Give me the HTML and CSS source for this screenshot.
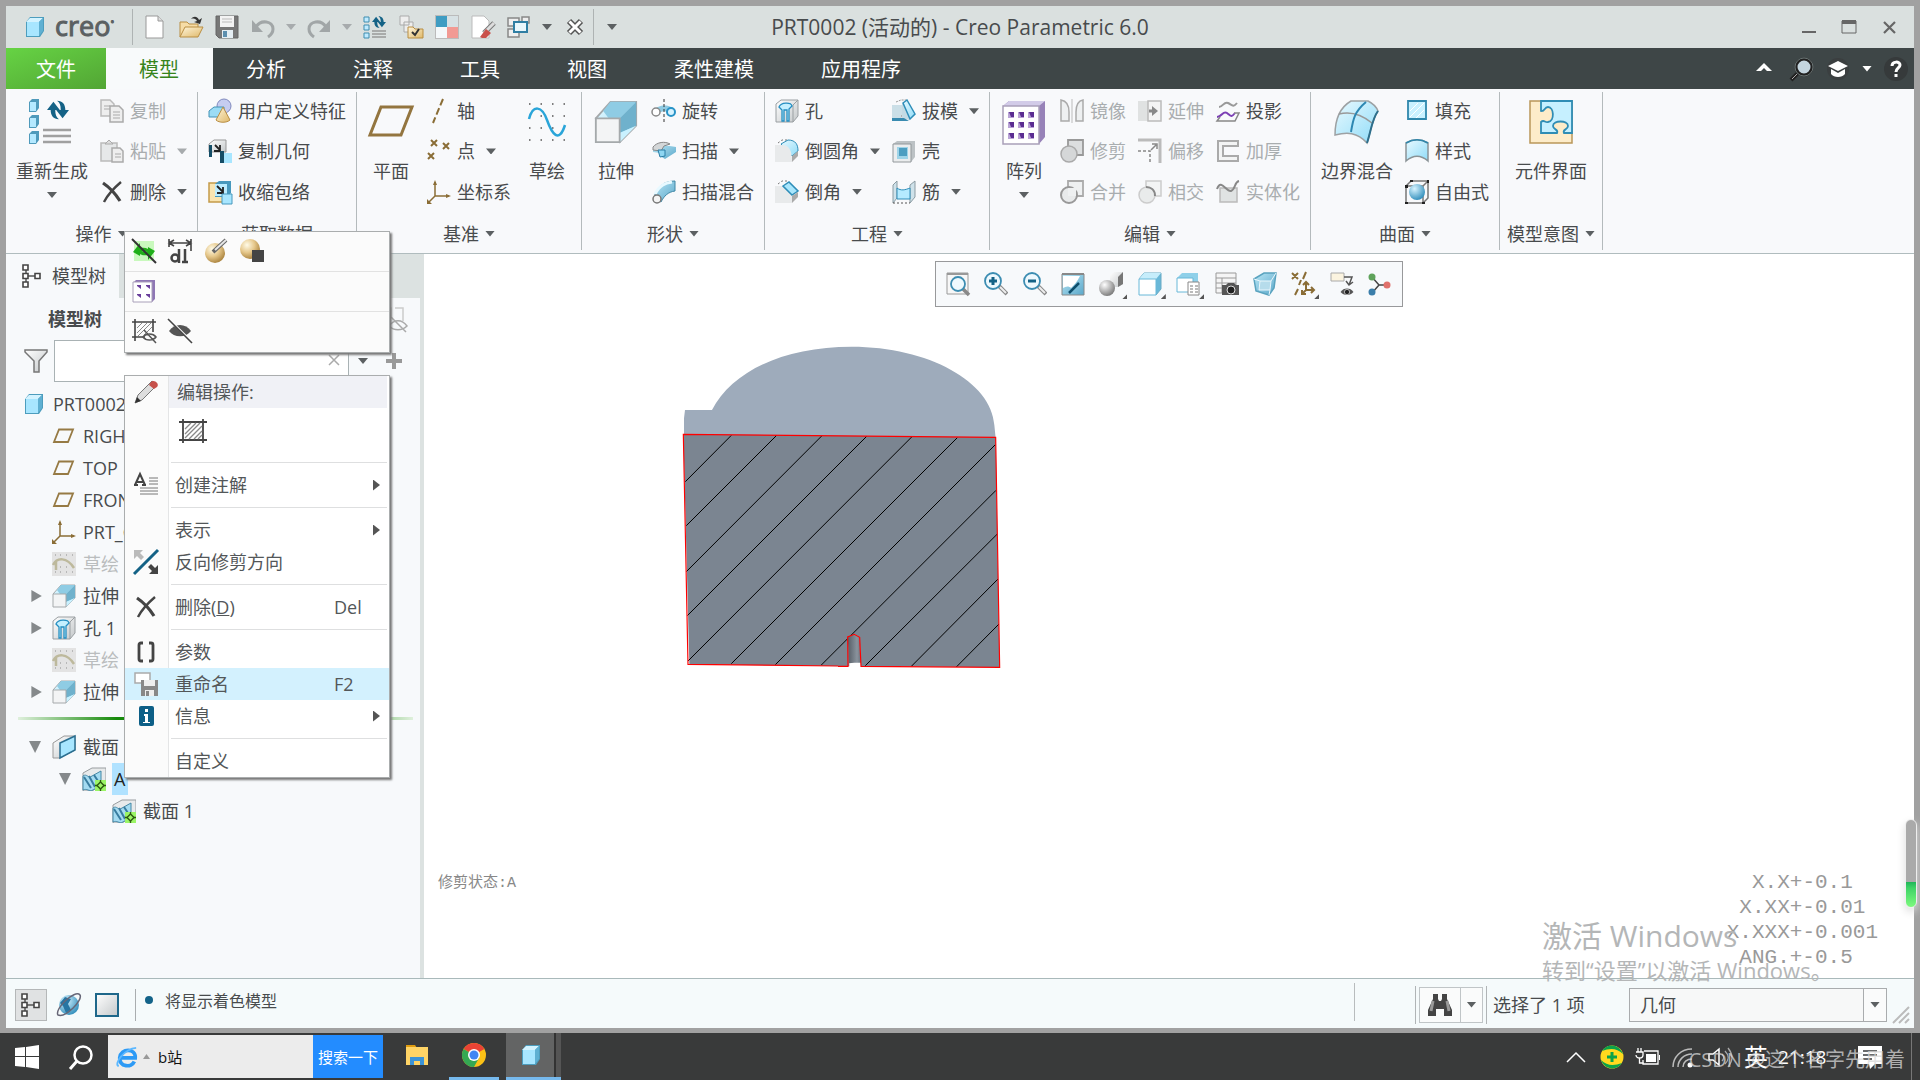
FILE: index.html
```html
<!DOCTYPE html>
<html lang="zh-CN">
<head>
  <meta charset="UTF-8">
  <title>PRT0002 - Creo Parametric 6.0</title>
  <link rel="stylesheet" href="styles.css">
</head>
<body>
  <!-- shared gradients and icons -->
  <svg class="sprite" aria-hidden="true">
    <defs>
      <linearGradient id="blue" x1="0" y1="0" x2="1" y2="1"><stop offset="0" stop-color="#e8f9ff"/><stop offset="1" stop-color="#8fdcf8"/></linearGradient>
      <linearGradient id="deep" x1="0" y1="0" x2="1" y2="1"><stop offset="0" stop-color="#b9e6f5"/><stop offset="1" stop-color="#5ba8ca"/></linearGradient>
      <linearGradient id="grey" x1="0" y1="0" x2="1" y2="1"><stop offset="0" stop-color="#ffffff"/><stop offset="1" stop-color="#c4c8ca"/></linearGradient>
      <linearGradient id="sand" x1="0" y1="0" x2="1" y2="1"><stop offset="0" stop-color="#fff6dc"/><stop offset="1" stop-color="#dfb869"/></linearGradient>
      <radialGradient id="ball" cx=".35" cy=".3" r=".75"><stop offset="0" stop-color="#fffbe8"/><stop offset=".5" stop-color="#e6c88c"/><stop offset="1" stop-color="#a8803a"/></radialGradient>
      <radialGradient id="steel" cx=".35" cy=".3" r=".75"><stop offset="0" stop-color="#fff"/><stop offset="1" stop-color="#777"/></radialGradient>
      <radialGradient id="sea" cx=".35" cy=".3" r=".75"><stop offset="0" stop-color="#d8f4ff"/><stop offset="1" stop-color="#2f8dbb"/></radialGradient>
      <linearGradient id="slot"><stop offset="0" stop-color="#555d66"/><stop offset=".7" stop-color="#8a939d"/><stop offset="1" stop-color="#6b747e"/></linearGradient>
    </defs>
    <symbol id="cube" viewBox="0 0 24 24"><path d="M3 7l4-5h14v14l-4 6H3z" fill="#4d9dbd"/><path d="M3 7l4-4h13l-4 4z" fill="#d3f3ff"/><path d="M16 7l4-4v13l-4 5z" fill="#5fb0d2"/><path d="M4 7h12v14H4z" fill="#a8e6ff"/></symbol>
    <symbol id="plane" viewBox="0 0 24 24"><path d="M7 5.500h14L16 18H2z" fill="none" stroke="#967a44" stroke-width="1.800"/></symbol>
    <symbol id="csys" viewBox="0 0 24 24"><path d="M8 2v14h14M8 16l-6 6" fill="none" stroke="#8a6d36" stroke-width="1.500"/><path d="M8 0l2 5H6zM24 16l-5-2v4zM0 24v-5l5 5z" fill="#8a6d36"/></symbol>
    <symbol id="extrude" viewBox="0 0 24 24"><path d="M1 10L9 1h14v13l-9 9z" fill="url(#blue)" stroke="#a5a9ab"/><path d="M5 6l4-5h14l-9 9H8z" fill="#8fcce4"/><path d="M14 10l9-9v13l-9 4z" fill="#6fb1cc"/><path d="M14 23v-5l9-4z" fill="#c9f1ff"/><path d="M1 10h13v13H1z" fill="#f3f4f5" stroke="#a5a9ab"/></symbol>
    <symbol id="hole" viewBox="0 0 24 24"><path d="M1 5l5-4h17v16l-5 6H1z" fill="url(#grey)" stroke="#9a9fa2"/><path d="M18 23V6l5-5" fill="none" stroke="#9a9fa2"/><path d="M4 8c2-5 12-5 13-1l-3 3v12h-2V11h-3v11H7V11z" fill="#c4f0ff" stroke="#258fc2" stroke-width="1.300"/></symbol>
    <symbol id="sketch" viewBox="0 0 24 24"><path d="M0 0h24v24H0z" fill="#e3e3e3"/><path d="M3 3h1M8 3h1M14 3h1M20 3h1M3 20h1M8 20h1M14 20h1M20 20h1M8 15h1M14 15h1" stroke="#aaa" stroke-width="1.500"/><path d="M1 13c4-8 14-8 21 3M4 10v8" fill="none" stroke="#bdb99c" stroke-width="2.500"/></symbol>
    <symbol id="section" viewBox="0 0 24 24"><path d="M1 6l9-5h14v14L10 24H1z" fill="#e8eaeb" stroke="#989da0"/><path d="M1 9c4-3 5 3 9 0l9-5v14l-8 5c-4 2-6-2-10 0z" fill="#a4dbf1" stroke="#4588a6"/><path d="M2 10l7 11M7 9l6 11M12 8l6 9" stroke="#397da0" stroke-width="2"/><path d="M13 13h11v11H13z" fill="#9bf566"/><path d="M18.500 13v11M13 18.500h11" stroke="#2d5a10" stroke-width="1.300"/><path d="M18.500 15l3.500 3.500-3.500 3.500-3.500-3.500z" fill="#9bf566" stroke="#2d5a10" stroke-width="1.400"/></symbol>
    <symbol id="cross" viewBox="0 0 24 24"><path d="M3 3c6 4 12 10 17 18" fill="none" stroke="#444" stroke-width="3.200"/><path d="M21 2C14 8 8 14 4 22" fill="none" stroke="#444" stroke-width="2.400"/></symbol>
    <symbol id="nodes" viewBox="0 0 24 24"><path d="M6 3v18M6 12h12" stroke="#555" stroke-width="1.500"/><path d="M3 1h5v5H3zM3 9.500h5v5H3zM3 18h5v5H3zM15 9.500h5v5h-5z" fill="#fff" stroke="#444" stroke-width="1.600"/></symbol>
    <symbol id="spin" viewBox="0 0 24 24"><path d="M7 3L0 12h4c0 6 3 10 9 10-3-2-4-5-4-10h5zM17 21l7-9h-4c0-6-3-10-9-10 3 2 4 5 4 10h-5z"/></symbol>
    <symbol id="hatch" viewBox="0 0 28 24"><path d="M4 0v24M24 0v24M0 3h28M0 21h28" stroke="#444" stroke-width="1.800"/><path d="M6 10l6-6M6 15L17 4M6 19L21 4M10 20L23 7M15 20l8-8M19 20l4-4" stroke="#888" stroke-width="1.300"/></symbol>
    <symbol id="eye" viewBox="0 0 24 24"><path d="M1 12c5-8 17-8 22 0-5 7-17 7-22 0z" fill="#555"/><circle cx="12" cy="12" r="4.500" fill="#222" stroke="#fff"/></symbol>
    <symbol id="lens" viewBox="0 0 24 24"><path d="M15 14l8 8" stroke="#888" stroke-width="4"/><path d="M16 15l6 6" stroke="#eee" stroke-width="2"/><circle cx="9" cy="9" r="8" fill="#eef9fe" stroke="#3c8db2" stroke-width="1.800"/></symbol>
  </svg>

  <div class="window">
    <header class="titlebar">
      <div class="logo">
        <svg class="icon"><use href="#cube"/></svg>
        <span>creo<sup>•</sup></span>
      </div>
      <div class="quick">
        <button title="新建"><svg class="icon" viewBox="0 0 24 24"><path d="M3 1h12l5 5v17H3z" fill="#fff" stroke="#999"/><path d="M15 1v5h5" fill="#ddd" stroke="#999"/></svg></button>
        <button title="打开"><svg class="icon" viewBox="0 0 24 24"><path d="M1 22V7h7l2 2h9v4" fill="#f6dca6" stroke="#b98e43"/><path d="M1 22l5-10h18l-5 10z" fill="url(#sand)" stroke="#b98e43"/><path d="M12 4c3-4 7-2 8 1l3-2-2 6-6-2 3-1c-1-2-3-3-6-2z" fill="#333"/></svg></button>
        <button title="保存"><svg class="icon" viewBox="0 0 24 24"><path d="M1 1h22v22H4l-3-3z" fill="#777" stroke="#666"/><path d="M5 1h14v11H5z" fill="#f3f3f3"/><path d="M7 4h10M7 7h10" stroke="#bbb"/><path d="M7 15h11v8H7z" fill="#e5eef3"/><path d="M8 16h4v6H8z" fill="#5d8fae"/></svg></button>
        <button title="撤消"><svg class="icon" viewBox="0 0 24 24"><path d="M5 12c5-8 17-6 17 2 0 3-2 6-5 8" fill="none" stroke="#a1a6a7" stroke-width="3"/><path d="M1 5v12h11z" fill="#a1a6a7"/></svg></button>
        <i class="arrow off"></i>
        <button title="重做"><svg class="icon" viewBox="0 0 24 24"><path d="M19 12C14 4 2 6 2 14c0 3 2 6 5 8" fill="none" stroke="#a1a6a7" stroke-width="3"/><path d="M23 5v12H12z" fill="#a1a6a7"/></svg></button>
        <i class="arrow off"></i>
        <button title="重新生成"><svg class="icon" viewBox="0 0 24 24"><path d="M1 2h5v5H1zM1 10h5v5H1zM1 18h5v5H1z" fill="#bfeaff" stroke="#3e8daf"/><use href="#spin" x="8" y="0" width="16" height="14" fill="#146286"/><path d="M9 16h14M9 19h14M9 22h14" stroke="#999" stroke-width="1.500"/></svg></button>
        <button title="验证"><svg class="icon" viewBox="0 0 24 24"><path d="M1 1h9v9H1zM5 7h9v10H5z" fill="#eee" stroke="#aaa"/><path d="M9 12h5l2 2h8v9H9z" fill="url(#sand)" stroke="#b98e43"/><path d="M13 17l3 3 4-6" fill="none" stroke="#333" stroke-width="2"/></svg></button>
        <button title="外观"><svg class="icon" viewBox="0 0 24 24"><path d="M0 0h24v24H0z" fill="#bbb"/><path d="M1 1h11v11H1z" fill="#3f9cc2"/><path d="M12 1h11v11H12z" fill="#d7e1e4"/><path d="M1 12h11v11H1z" fill="#f4f8fa"/><path d="M12 12h11v11H12z" fill="#f29a94"/></svg></button>
        <button title="拭除"><svg class="icon" viewBox="0 0 24 24"><path d="M1 1h12l5 5v17H1z" fill="#fff" stroke="#bbb"/><path d="M13 18L23 8" stroke="#777" stroke-width="5"/><path d="M13 18L23 8" stroke="#ddd" stroke-width="3"/><path d="M9 22l6-8 5 4-5 5h-4z" fill="#c9504a"/></svg></button>
        <button title="窗口"><svg class="icon" viewBox="0 0 24 24"><path d="M1 3h11v8H1zM1 14h11v8H1zM15 2h7v6h-7z" fill="#eee" stroke="#888" stroke-width="1.500"/><path d="M7 7h13v10H7z" fill="#e9f7fc" stroke="#2f7ea3" stroke-width="2"/></svg></button>
        <i class="arrow"></i>
        <button title="关闭"><svg class="icon" viewBox="0 0 24 24"><path d="M6 6l12 12M18 6L6 18" stroke="#555" stroke-width="6"/><path d="M6.500 6.500l11 11M17.500 6.500l-11 11" stroke="#fff" stroke-width="3"/></svg></button>
      </div>
      <i class="arrow more"></i>
      <h1>PRT0002 (活动的) - Creo Parametric 6.0</h1>
      <div class="controls">
        <button title="最小化"><svg viewBox="0 0 16 16"><path d="M1 13h14" stroke="#666" stroke-width="2"/></svg></button>
        <button title="最大化"><svg viewBox="0 0 16 16"><path d="M1 2h14v12H1z" fill="none" stroke="#666"/><path d="M1 3h14" stroke="#666" stroke-width="4"/></svg></button>
        <button title="关闭窗口"><svg viewBox="0 0 16 16"><path d="M3 3l11 11M14 3L3 14" stroke="#666" stroke-width="2.200"/></svg></button>
      </div>
    </header>

    <nav class="tabs">
      <button class="file">文件</button>
      <button class="active">模型</button>
      <button>分析</button>
      <button>注释</button>
      <button>工具</button>
      <button>视图</button>
      <button>柔性建模</button>
      <button>应用程序</button>
      <div class="help">
        <svg class="icon" viewBox="0 0 24 24"><path d="M4 14l8-8 8 8h-5l-3-3-3 3z" fill="#fff"/></svg>
        <svg class="icon" viewBox="0 0 24 24"><path d="M9 15l-8 8" stroke="#222" stroke-width="4"/><path d="M2 22l7-7" stroke="#aaa"/><circle cx="14" cy="10" r="8" fill="#c4d5df" stroke="#222" stroke-width="3"/><circle cx="14" cy="10" r="9" fill="none" stroke="#9aa" stroke-width=".6"/></svg>
        <svg class="icon" viewBox="0 0 24 24"><circle cx="12" cy="12" r="11" fill="#3b3f40"/><path d="M2 9l10-5 10 5-10 5zM5 12v5c3 4 11 4 14 0v-5l-7 4z" fill="#fff"/></svg>
        <i class="arrow white"></i>
        <svg class="icon" viewBox="0 0 24 24"><circle cx="12" cy="12" r="12" fill="#363a3b"/><path d="M8 9c0-5 8-5 8-1 0 3-4 3-4 7M12 17v3" fill="none" stroke="#fff" stroke-width="3"/></svg>
      </div>
    </nav>

    <section class="ribbon">
      <div class="group">
        <div class="tools">
          <button class="big wide"><svg viewBox="0 0 44 44"><path d="M-1 2l3-3h7v9l-3 4h-7zM-1 18l3-3h7v9l-3 4h-7zM-1 34l3-3h7v9l-3 4h-7z" fill="#4f9abb"/><path d="M0 2h6v9H0zM0 18h6v9H0zM0 34h6v9H0z" fill="#b5e9ff"/><use href="#spin" x="15" y="-1" width="26" height="22" fill="#146286"/><path d="M13 30h28M13 36h28M13 42h28" stroke="#a0a0a0" stroke-width="2.500"/></svg>重新生成<i class="arrow"></i></button>
          <div class="col">
            <button disabled><svg class="icon" viewBox="0 0 24 24"><path d="M1 1h9l4 4v12H1z" fill="#eee" stroke="#bbb" stroke-width="1.500"/><path d="M10 7h9l4 4v12H10z" fill="#eee" stroke="#aaa" stroke-width="1.500"/><path d="M4 7h6M4 10h6M13 13h7M13 16h7M13 19h7" stroke="#aaa"/></svg>复制</button>
            <button disabled><svg class="icon" viewBox="0 0 24 24"><path d="M1 4h16v18H1z" fill="#e6e8e9" stroke="#bbb" stroke-width="1.500"/><path d="M5 5l4-4 4 4z" fill="#ddd" stroke="#aaa"/><path d="M12 9h8l3 3v11H12z" fill="#eee" stroke="#aaa" stroke-width="1.500"/><path d="M15 15h6M15 18h6" stroke="#aaa"/></svg>粘贴<i class="arrow off"></i></button>
            <button><svg class="icon"><use href="#cross"/></svg>删除<i class="arrow"></i></button>
          </div>
        </div>
        <div class="name">操作<i class="arrow"></i></div>
      </div>

      <div class="group">
        <div class="tools">
          <div class="col">
            <button><svg class="icon" viewBox="0 0 24 24"><circle cx="16" cy="7" r="7" fill="#c6cdf0" stroke="#8089bd"/><path d="M1 12l5-4h10v10H1z" fill="#9bdcf5" stroke="#4493b6"/><path d="M15 8l7 13c-3 3-11 3-14 0z" fill="url(#sand)" stroke="#b98e43"/></svg>用户定义特征</button>
            <button><svg class="icon" viewBox="0 0 24 24"><path d="M1 5l5-4h12v12H1z" fill="url(#grey)" stroke="#999"/><path d="M1 6h3v12H1z" fill="#144d66"/><path d="M7 6l5 5M12 6v6H6" fill="none" stroke="#222" stroke-width="1.800"/><path d="M12 14h12v10H12z" fill="#a8e6ff"/><path d="M12 12h4v12h-4z" fill="#144d66"/></svg>复制几何</button>
            <button><svg class="icon" viewBox="0 0 24 24"><path d="M1 3h16v19H1z" fill="#f9e4b0" stroke="#c39a4a" stroke-width="1.500"/><path d="M7 4l4-3h12v12l-4 4H7z" fill="#4798bd"/><path d="M7 4h12v12H7z" fill="#bcecff"/><path d="M9 6l6 6M15 7v6H9" fill="none" stroke="#222" stroke-width="1.800"/><path d="M14 14h10v10H14z" fill="#a8e6ff" stroke="#4798bd"/></svg>收缩包络</button>
          </div>
        </div>
        <div class="name">获取数据</div>
      </div>

      <div class="group">
        <div class="tools">
          <button class="big"><svg viewBox="0 0 44 44"><path d="M12 7h31L32 35H1z" fill="none" stroke="#93753f" stroke-width="3"/></svg>平面</button>
          <div class="col">
            <button><svg class="icon" viewBox="0 0 24 24"><path d="M16 0L6 24" stroke="#8a6d36" stroke-width="2" stroke-dasharray="7 3"/></svg>轴</button>
            <button><svg class="icon" viewBox="0 0 24 24"><path d="M4 1l6 6M10 1L4 7M16 4l6 6M22 4l-6 6M1 14l6 6M7 14l-6 6" stroke="#8a6d36" stroke-width="2"/></svg>点<i class="arrow"></i></button>
            <button><svg class="icon"><use href="#csys"/></svg>坐标系</button>
          </div>
          <button class="big"><svg viewBox="0 0 44 44"><path d="M4 4h36M4 16h36M4 28h36M4 40h36" stroke="#555" stroke-width="1.500" stroke-dasharray="1.500 10"/><path d="M4 19C8 4 17 6 22 20s12 24 18 5" fill="none" stroke="#2aa5d9" stroke-width="2.500"/></svg>草绘</button>
        </div>
        <div class="name">基准<i class="arrow"></i></div>
      </div>

      <div class="group">
        <div class="tools">
          <button class="big"><svg><use href="#extrude"/></svg>拉伸</button>
          <div class="col">
            <button><svg class="icon" viewBox="0 0 24 24"><path d="M3 11C5 5 20 5 22 11l-4 3-6-2-6 2z" fill="#8ecae2"/><path d="M12 0v24" stroke="#333" stroke-dasharray="3 2"/><circle cx="4" cy="13" r="4" fill="#fff" stroke="#888" stroke-width="1.500"/><circle cx="19" cy="13" r="4" fill="#d6f3ff" stroke="#2893c7" stroke-width="2"/></svg>旋转</button>
            <button><svg class="icon" viewBox="0 0 24 24"><path d="M1 10c6-6 10-4 23-2v5l-11 7-5-3v-3l-7-1z" fill="url(#deep)"/><path d="M1 8c4-5 12-6 17-3l-6 2-3 5-8-1z" fill="#d4d7d8" stroke="#888"/><path d="M6 11h7v6l-5 1z" fill="#8ed6f2" stroke="#2a7ea6"/></svg>扫描<i class="arrow"></i></button>
            <button><svg class="icon" viewBox="0 0 24 24"><path d="M2 17C6 6 12 1 23 1v10C16 12 12 16 9 22z" fill="url(#deep)" stroke="#3f87a6"/><path d="M3 14C8 5 13 3 20 2" fill="none" stroke="#e8f9ff" stroke-width="3"/><circle cx="5" cy="19" r="4" fill="#f4f4f4" stroke="#777" stroke-width="1.500"/></svg>扫描混合</button>
          </div>
        </div>
        <div class="name">形状<i class="arrow"></i></div>
      </div>

      <div class="group">
        <div class="tools">
          <div class="col">
            <button><svg class="icon"><use href="#hole"/></svg>孔</button>
            <button><svg class="icon" viewBox="0 0 24 24"><path d="M3 4l4-3h6" fill="none" stroke="#777" stroke-dasharray="2 2"/><path d="M6 5l7-4c8 0 10 5 10 11l-6 5z" fill="url(#blue)" stroke="#2e8db8"/><path d="M0 6h7c7 0 10 5 10 17H0z" fill="#e8eaeb"/><path d="M17 17l6-5v5l-6 6z" fill="#aaa"/></svg>倒圆角<i class="arrow"></i></button>
            <button><svg class="icon" viewBox="0 0 24 24"><path d="M0 6h8l9 9v8H0z" fill="#e8eaeb"/><path d="M3 4l4-3h6" fill="none" stroke="#777" stroke-dasharray="2 2"/><path d="M8 6l6-4 9 9-6 4z" fill="#a9e6fc" stroke="#2e8db8" stroke-width="1.500"/><path d="M17 16l6-4v5l-6 6z" fill="#aaa"/></svg>倒角<i class="arrow"></i></button>
          </div>
          <div class="col">
            <button><svg class="icon" viewBox="0 0 24 24"><path d="M0 6h12l-3 13H0z" fill="#cbdfe7"/><path d="M4 3l5-2h6l-6 18" fill="none" stroke="#999" stroke-dasharray="2 1"/><path d="M10 19V5l5-4 8 14-6 6z" fill="#c4dbe4"/><path d="M11 4l4-3 8 14-5 5z" fill="url(#blue)" stroke="#2e8db8" stroke-width="1.500"/><path d="M0 19h12l5 3H0z" fill="#398bb0"/></svg>拔模<i class="arrow"></i></button>
            <button><svg class="icon" viewBox="0 0 24 24"><path d="M1 5l4-3h18v16l-4 5H1z" fill="#bcc2c5"/><path d="M1 5h18v18H1z" fill="#ebedee" stroke="#92989b"/><path d="M5 8h11v12H5z" fill="#9fd4e8"/><path d="M7 9h8v8H7z" fill="#4d9ec1"/></svg>壳</button>
            <button><svg class="icon" viewBox="0 0 24 24"><path d="M1 5l4-4v17l-4 5zM18 5l5-4v16l-5 6z" fill="#cfe2ea" stroke="#8b9ba2"/><path d="M5 8c4 3 8 2 13 0v11H5z" fill="#b5ebff" stroke="#2e8db8"/><path d="M1 23h17" stroke="#555" stroke-dasharray="2 2"/></svg>筋<i class="arrow"></i></button>
          </div>
        </div>
        <div class="name">工程<i class="arrow"></i></div>
      </div>

      <div class="group">
        <div class="tools">
          <button class="big"><svg viewBox="0 0 44 44"><path d="M1 6l6-5h36v36l-6 7z" fill="#9782b8"/><path d="M1 6l6-5h36l-6 5z" fill="#d2cbe8"/><path d="M1 6h36v38H1z" fill="#fff" stroke="#a9a0b9" stroke-width="1.500"/><path d="M6 12h6v6H6zM16 12h6v6h-6zM26 12h6v6h-6zM6 22h6v6H6zM16 22h6v6h-6zM26 22h6v6h-6zM6 33h6v6H6zM16 33h6v6h-6zM26 33h6v6h-6z" fill="#b9a3d6"/><path d="M7 12h5v5H9zM17 12h5v5h-3zM27 12h5v5h-3zM7 22h5v5H9zM17 22h5v5h-3zM27 22h5v5h-3zM7 33h5v5H9zM17 33h5v5h-3zM27 33h5v5h-3z" fill="#5b2d92"/></svg>阵列<i class="arrow"></i></button>
          <div class="col">
            <button disabled><svg class="icon" viewBox="0 0 24 24"><path d="M1 1c6 1 8 6 8 12v9H1zM23 1c-6 1-7 6-7 12v9h7z" fill="#eef0f1" stroke="#aaa" stroke-width="1.500"/><path d="M12 0v24" stroke="#bbb"/></svg>镜像</button>
            <button disabled><svg class="icon" viewBox="0 0 24 24"><path d="M8 1h15v15H8z" fill="#dcdedf" stroke="#999" stroke-width="1.800"/><circle cx="9" cy="15" r="8" fill="#d5d7d8" stroke="#aaa" stroke-width="1.500"/></svg>修剪</button>
            <button disabled><svg class="icon" viewBox="0 0 24 24"><path d="M8 1h15v15H8z" fill="#eef0f1" stroke="#aaa" stroke-width="1.800"/><circle cx="9" cy="15" r="8" fill="#e8eaeb" stroke="#999" stroke-width="2"/><path d="M8 8h8v8H8z" fill="#eef0f1"/></svg>合并</button>
          </div>
          <div class="col">
            <button disabled><svg class="icon" viewBox="0 0 24 24"><path d="M0 2h12v20H0z" fill="#e0e2e2"/><path d="M10 2h13v20H10z" fill="#f4f4f4" stroke="#bbb" stroke-width="1.500"/><path d="M11 12h4" stroke="#888" stroke-width="3"/><path d="M14 7l6 5-6 5z" fill="#888"/></svg>延伸</button>
            <button disabled><svg class="icon" viewBox="0 0 24 24"><path d="M0 1h22v23" fill="none" stroke="#bbb" stroke-width="3"/><path d="M0 12h12v12" fill="none" stroke="#888" stroke-width="1.500" stroke-dasharray="3 2"/><path d="M13 11l5-5M14 5h5v5" fill="none" stroke="#888" stroke-width="1.500"/></svg>偏移</button>
            <button disabled><svg class="icon" viewBox="0 0 24 24"><path d="M8 1h15v15H8z" fill="#f3f4f4" stroke="#ccc" stroke-width="1.500"/><circle cx="9" cy="15" r="8" fill="#e9ebeb" stroke="#ccc" stroke-width="1.500"/><path d="M8 7c5 0 9 3 9 9" fill="none" stroke="#888" stroke-width="2"/></svg>相交</button>
          </div>
          <div class="col">
            <button><svg class="icon" viewBox="0 0 24 24"><path d="M3 8c4 0 5-6 9-4s5 5 9 0" fill="none" stroke="#999" stroke-width="2"/><path d="M1 18c5 0 6-7 10-4s4 5 8 0" fill="none" stroke="#7c3fb5" stroke-width="2"/><path d="M4 18l-3 4h18l4-8h-5" fill="none" stroke="#888" stroke-width="1.500"/></svg>投影</button>
            <button disabled><svg class="icon" viewBox="0 0 24 24"><path d="M2 2h20v5H7v10h15v5H2z" fill="#f3f4f4" stroke="#aaa" stroke-width="2"/></svg>加厚</button>
            <button disabled><svg class="icon" viewBox="0 0 24 24"><path d="M4 8h17v14H4z" fill="#e0e3e3" stroke="#bbb" stroke-width="1.500"/><path d="M1 9C5-2 10 12 15 11c5-2 3-9 8-10" fill="none" stroke="#888" stroke-width="2"/></svg>实体化</button>
          </div>
        </div>
        <div class="name">编辑<i class="arrow"></i></div>
      </div>

      <div class="group">
        <div class="tools">
          <button class="big wide"><svg viewBox="0 0 44 44"><path d="M16 1h17c4 2 8 5 10 10-6 8-7 20-11 32C22 32 12 32 0 35 0 20 4 8 16 1z" fill="url(#blue)" stroke="#9da1a3" stroke-width="1.500"/><path d="M4 14c12-3 22 0 33 9" fill="none" stroke="#999" stroke-width="1.500"/><path d="M31 2C19 12 18 20 16 32" fill="none" stroke="#2d87b2" stroke-width="2"/><path d="M43 11c-6 8-7 20-11 32" fill="none" stroke="#2d6f8c" stroke-width="2"/></svg>边界混合</button>
          <div class="col">
            <button><svg class="icon" viewBox="0 0 24 24"><path d="M3 2h18v18H3z" fill="#c9f1ff" stroke="#2f87ac" stroke-width="1.800"/><path d="M5 12l8-8M5 18L19 4M11 19l8-8" stroke="#fff"/></svg>填充</button>
            <button><svg class="icon" viewBox="0 0 24 24"><path d="M1 4c7-4 15-4 22 0v18c-7-6-15-6-22 0z" fill="url(#blue)" stroke="#8a9396" stroke-width="1.500"/><path d="M1 4c7-4 15-4 22 0" fill="none" stroke="#2f87ac" stroke-width="1.500"/></svg>样式</button>
            <button><svg class="icon" viewBox="0 0 24 24"><path d="M1 6h17v17H1zM1 6l5-5h17v17l-5 5M18 6l5-5" fill="none" stroke="#777" stroke-width="1.500"/><circle cx="12" cy="12" r="8" fill="url(#sea)"/><path d="M0 5h3v3H0zM17 22h3v2h-3zM5 0h3v2H5zM22 0h2v3h-2zM0 22h3v2H0z" fill="#222"/></svg>自由式</button>
          </div>
        </div>
        <div class="name">曲面<i class="arrow"></i></div>
      </div>

      <div class="group">
        <div class="tools center">
          <button class="big wide"><svg viewBox="0 0 44 44"><path d="M1 1h42v42H1z" fill="#fdecc9" stroke="#b9975a" stroke-width="1.500"/><path d="M12 1h31v32h-8c-2-4 4-3 4-7 0-6-15-6-15 0 0 4 6 3 4 7H12V22c3-3 4 1 7 0 7-1 6-15 0-15-4 0-3 5-7 4z" fill="#c6f0ff" stroke="#2f8db5" stroke-width="1.800"/></svg>元件界面</button>
        </div>
        <div class="name">模型意图<i class="arrow"></i></div>
      </div>
    </section>

    <main class="workspace">
      <aside class="side">
        <div class="side-tabs">
          <button><svg class="icon tall"><use href="#nodes"/></svg>模型树</button>
        </div>
        <div class="side-head">
          <h2>模型树</h2>
          <svg class="icon" viewBox="0 0 24 24"><path d="M1 1h6v8H1zM11 1h8v13" fill="none" stroke="#ccc" stroke-width="1.500"/><path d="M5 19c5-7 13-7 18 0-5 5-13 5-18 0zM7 10l15 15" fill="none" stroke="#aaa" stroke-width="1.500"/></svg>
        </div>
        <div class="filter">
          <label for="find" title="过滤"><svg class="icon" viewBox="0 0 24 24"><path d="M1 1h22v2l-8 9v11h-5V12L1 3z" fill="url(#grey)" stroke="#777" stroke-width="1.500"/></svg></label>
          <div class="find"><input id="find" type="text"><svg viewBox="0 0 12 12"><path d="M1 1l10 10M11 1L1 11" stroke="#aaa" stroke-width="1.500"/></svg></div>
          <i class="arrow"></i>
          <svg class="plus" viewBox="0 0 16 16"><path d="M8 0v16M0 8h16" stroke="#999" stroke-width="4"/></svg>
        </div>
        <ul class="tree">
          <li class="root"><svg class="icon"><use href="#cube"/></svg>PRT0002.PRT</li>
          <li><i></i><svg class="icon"><use href="#plane"/></svg>RIGHT</li>
          <li><i></i><svg class="icon"><use href="#plane"/></svg>TOP</li>
          <li><i></i><svg class="icon"><use href="#plane"/></svg>FRONT</li>
          <li><i></i><svg class="icon"><use href="#csys"/></svg>PRT_CSYS_DEF</li>
          <li class="dim"><i></i><svg class="icon"><use href="#sketch"/></svg>草绘 1</li>
          <li><i class="closed"></i><svg class="icon"><use href="#extrude"/></svg>拉伸 1</li>
          <li><i class="closed"></i><svg class="icon"><use href="#hole"/></svg>孔 1</li>
          <li class="dim"><i></i><svg class="icon"><use href="#sketch"/></svg>草绘 2</li>
          <li><i class="closed"></i><svg class="icon"><use href="#extrude"/></svg>拉伸 2</li>
        </ul>
        <hr>
        <ul class="tree">
          <li><i class="open"></i><svg class="icon" viewBox="0 0 24 24"><path d="M1 8l11-7h11v14L8 23H1z" fill="url(#grey)" stroke="#999"/><path d="M8 8l15-7v14L8 23z" fill="#a8e6ff" stroke="#2a6e90" stroke-width="1.500"/></svg>截面</li>
          <li class="lvl2"><i class="open"></i><svg class="icon"><use href="#section"/></svg><span class="picked">A</span></li>
          <li class="lvl3"><i></i><svg class="icon"><use href="#section"/></svg>截面 1</li>
        </ul>
      </aside>

      <div class="canvas">
        <div class="view-bar">
          <button title="重新调整"><svg class="icon" viewBox="0 0 24 24"><path d="M1 1h21v21H1z" fill="#f7f7f7" stroke="#999"/><path d="M1 2h21" stroke="#999" stroke-width="2"/><path d="M16 16l7 7" stroke="#888" stroke-width="3.500"/><circle cx="12" cy="12" r="7" fill="#eef9fe" stroke="#3c8db2" stroke-width="1.800"/></svg></button>
          <button title="放大"><svg class="icon" viewBox="0 0 24 24"><use href="#lens"/><path d="M9 5v8M5 9h8" stroke="#146286" stroke-width="3"/></svg></button>
          <button title="缩小"><svg class="icon" viewBox="0 0 24 24"><use href="#lens"/><path d="M5 9h8" stroke="#146286" stroke-width="3"/></svg></button>
          <button title="重画"><svg class="icon" viewBox="0 0 24 24"><path d="M1 2h22v21H1z" fill="url(#deep)" stroke="#888"/><path d="M1 2h22" stroke="#888" stroke-width="2"/><path d="M2 4h17c-3 6-6 9-9 12-2-2-5-2-8 0z" fill="#fff"/><path d="M18 11L8 21" stroke="#0f4f6d" stroke-width="2.500"/></svg></button>
          <button class="drop" title="渲染"><svg class="icon" viewBox="0 0 24 24"><path d="M11 3l4-3h9v12l-5 3h-8z" fill="url(#grey)"/><path d="M19 5l5-5v12l-5 3z" fill="#777"/><circle cx="8" cy="16" r="8" fill="url(#steel)"/></svg></button>
          <button class="drop" title="显示样式"><svg class="icon" viewBox="0 0 24 24"><path d="M1 7l5-6h17v16l-5 6z" fill="#6ab8d8" stroke="#68aac4"/><path d="M1 7l5-6h17l-5 6z" fill="#c6edfb"/><path d="M1 7h17v16H1z" fill="#fff" stroke="#68b8d8"/></svg></button>
          <button class="drop" title="已保存方向"><svg class="icon" viewBox="0 0 24 24"><path d="M1 6l5-5h16v13l-5 6z" fill="#8fd0e9"/><path d="M1 6h16v14H1z" fill="#fff" stroke="#68b8d8"/><path d="M12 10h11v13H12z" fill="#fff" stroke="#888"/><path d="M14 14h3M14 17h3M14 20h3M19 14h3M19 17h3M19 20h3" stroke="#777"/></svg></button>
          <button title="视图管理器"><svg class="icon" viewBox="0 0 24 24"><path d="M1 1h20v20H1zM1 6h20M1 11h20M1 16h20M7 6v15" fill="#f5f5f5" stroke="#999"/><path d="M7 13h4l2-2h6l2 2h3v10H7z" fill="#555"/><circle cx="16" cy="18" r="4" fill="#222" stroke="#ddd"/></svg></button>
          <button title="透视图"><svg class="icon" viewBox="0 0 24 24"><path d="M1 7l10-6h12l-2 15-5 7-13-4z" fill="url(#deep)" stroke="#5aa3bf" stroke-width="1.500"/><path d="M7 9h11l-1 9H6zM1 7l6 2M18 9l5-8M17 18l-1 5" fill="#b6dceb" stroke="#eaf7fc"/></svg></button>
          <button class="drop" title="基准显示"><svg class="icon" viewBox="0 0 24 24"><path d="M1 1l6 6M7 1L1 7M15 0l-3 7M10 8l-2 5M7 17l-3 6M15 10v8h8M15 18l-4 4M12 13l3-3 3 3M20 15l3 3-3 3M11 18v4h4" fill="none" stroke="#8a6d36" stroke-width="2"/></svg></button>
          <button title="注释显示"><svg class="icon" viewBox="0 0 24 24"><path d="M1 1h13v8H1z" fill="#fbf4e0" stroke="#aaa"/><path d="M14 5h8l-3 8M16 9l3 4 4-3" fill="none" stroke="#555" stroke-width="1.500"/><use href="#eye" x="10" y="13" width="14" height="14"/></svg></button>
          <button title="旋转中心"><svg class="icon" viewBox="0 0 24 24"><path d="M4 5l7 8-7 8M11 13h9" fill="none" stroke="#444" stroke-width="1.500"/><circle cx="4" cy="5" r="3.500" fill="#5fa35b"/><circle cx="4" cy="20" r="3.500" fill="#3b7eaa"/><circle cx="19" cy="13" r="3.500" fill="#e0716b"/></svg></button>
        </div>

        <svg class="part" viewBox="0 0 1110 1050">
          <path d="M72 320V265l3-25h81C215 125 370 50 575 50c230 0 420 105 428 235l4 40z" fill="#9eabbb"/>
          <path d="M70 313l937 9 12 690-416-3-4-88-16-8-18 8 3 88-480-6z" fill="#7b8591"/>
          <path d="M76 455L214 316M79 587L350 316M79 725L486 317M82 857L620 319M84 993L756 320M214 1001L892 323M346 1004l660-660M484 1005l524-524M616 1007l396-395M754 1009l260-262M889 1011l128-129" stroke="#000" stroke-width="3"/>
          <path d="M563 920l20-7 16 7 4 78h-20l-16 2z" fill="url(#slot)"/>
          <path d="M534 1009h30l-1-88 20-8 16 9 4 87 416 3-12-690-937-9 14 690 450 5" fill="none" stroke="#f00" stroke-width="3.500"/>
        </svg>

        <p class="state">修剪状态:A</p>
        <p class="tolerance">X.X+-0.1<br>X.XX+-0.01<br>X.XXX+-0.001<br>ANG.+-0.5&nbsp;</p>
        <div class="activate"><strong>激活 Windows</strong>转到“设置”以激活 Windows。</div>
        <div class="gauge"></div>
      </div>

      <div class="mini-bar">
        <div>
          <button title="隐含"><svg class="icon" viewBox="0 0 24 24"><path d="M2 2h20v20H2z" fill="#c9f9bd"/><path d="M1 13l7-9v5c5-1 9 0 10 4-3-1-6-1-10 0v4zM23 12l-7 9v-5c-5 1-9 0-10-4 3 1 6 1 10 0V8z" fill="#1fae19"/><path d="M0 0l24 24" stroke="#333" stroke-width="2"/></svg></button>
          <button title="编辑尺寸"><svg class="icon" viewBox="0 0 24 24"><path d="M1 0v8M23 0v12M2 4h20M6 1L1 4l5 3M18 1l5 3-5 3" fill="none" stroke="#444" stroke-width="1.600"/><path d="M11 10v14M17 10v14M14 23h6" fill="none" stroke="#444" stroke-width="2.500"/><circle cx="7" cy="19" r="3.500" fill="none" stroke="#444" stroke-width="2.500"/></svg></button>
          <button title="外观"><svg class="icon" viewBox="0 0 24 24"><circle cx="11" cy="14" r="10" fill="url(#ball)"/><path d="M9 13L22 1" stroke="#666" stroke-width="4"/><path d="M11 11L22 1" stroke="#e6e6e6" stroke-width="2"/></svg></button>
          <button title="移除外观"><svg class="icon" viewBox="0 0 24 24"><circle cx="10" cy="10" r="10" fill="url(#ball)"/><path d="M12 11h12v12H12z" fill="#444"/></svg></button>
        </div>
        <div>
          <button title="阵列"><svg class="icon" viewBox="0 0 24 24"><path d="M1 4l3-3h19v19l-3 3z" fill="#8f77b5"/><path d="M1 3h19v20H1z" fill="#fff" stroke="#a9a0b9"/><path d="M5 6h4v4L5 7zM14 6h4v4l-4-3zM5 15h4v4l-4-3zM14 15h4v4l-4-3z" fill="#6a3f9c"/></svg></button>
        </div>
        <div>
          <button title="显示剖面线"><svg class="icon" viewBox="0 0 24 24"><path d="M3 0v22M21 0v13M0 3h24M0 18h13" stroke="#444" stroke-width="1.600"/><path d="M5 9l5-5M5 14L15 4M6 17L19 4M12 16l8-8" stroke="#888"/><path d="M11 18c3-4 10-4 13 0-3 4-10 4-13 0zM12 11l12 13" fill="none" stroke="#555" stroke-width="1.500"/></svg></button>
          <button title="隐藏"><svg class="icon" viewBox="0 0 24 24"><path d="M1 12c5-8 17-8 22 0-5 7-17 7-22 0z" fill="#555"/><path d="M1 0l23 23" stroke="#fbfbfb" stroke-width="2"/><path d="M0 0l24 24" stroke="#444" stroke-width="1.600"/></svg></button>
        </div>
      </div>

      <div class="menu">
        <div class="menu-head"><svg class="icon" viewBox="0 0 24 24"><path d="M1 23l3-8L18 1l5 4L8 20z" fill="#ddd" stroke="#777"/><path d="M17 2c3-3 9 2 6 5l-3 2-5-4z" fill="#c6504a"/><path d="M1 23l2-6 4 4z" fill="#333"/></svg><span>编辑操作:</span></div>
        <button class="edit" title="编辑剖面线"><svg><use href="#hatch"/></svg></button>
        <hr>
        <button><svg class="icon" viewBox="0 0 24 24"><path d="M1 12L6 1l5 11M3 9h6M0 12h4M8 12h4" fill="none" stroke="#444" stroke-width="2"/><path d="M15 5h9M15 8h9M15 11h9M6 15h18M6 18h18M6 21h18" stroke="#777"/></svg>创建注解<i></i></button>
        <hr>
        <button>表示<i></i></button>
        <button><svg class="icon" viewBox="0 0 24 24"><path d="M0 24L24 0" stroke="#146286" stroke-width="3"/><path d="M0 0h9L6 3l4 4-3 3-4-4-3 3z" fill="#bbb"/><path d="M24 24h-9l3-3-4-4 3-3 4 4 3-3z" fill="#444"/></svg>反向修剪方向</button>
        <hr>
        <button><svg class="icon"><use href="#cross"/></svg><span>删除(<u>D</u>)</span><kbd>Del</kbd></button>
        <hr>
        <button><svg class="icon" viewBox="0 0 24 24"><path d="M9 3H7Q5 3 5 5v14q0 2 2 2h2M15 3h2q2 0 2 2v14q0 2-2 2h-2" fill="none" stroke="#444" stroke-width="2.800"/></svg>参数</button>
        <button class="hover"><svg class="icon" viewBox="0 0 24 24"><path d="M1 1h15v10H1z" fill="#fff" stroke="#aaa" stroke-width="1.500"/><path d="M7 8h17v16H7z" fill="#888"/><path d="M10 8h11v6H10zM11 18h9v6h-9z" fill="#eee"/><path d="M12 19h3v5h-3z" fill="#888"/></svg>重命名<kbd>F2</kbd></button>
        <button><svg class="icon" viewBox="0 0 24 24"><rect x="5" y="2" width="15" height="20" rx="2" fill="#0d5f87"/><path d="M11 5h3v3h-3zM10 10h4v8h2v1h-7v-1h2v-6h-1z" fill="#fff"/></svg>信息<i></i></button>
        <hr>
        <button>自定义</button>
      </div>
    </main>

    <footer class="status">
      <button class="on" title="导航器"><svg class="icon"><use href="#nodes"/></svg></button>
      <button title="浏览器"><svg class="icon" viewBox="0 0 24 24"><circle cx="12" cy="12" r="10" fill="url(#sea)"/><path d="M8 4l6 2-3 5 3 6-5 3-3-7-3-3z" fill="#2776a3"/><path d="M1 22C-3 16 18-4 23 2c3 5-14 23-22 20z" fill="none" stroke="#667" stroke-width="1.500"/></svg></button>
      <button title="全屏"><svg class="icon" viewBox="0 0 24 24"><rect x="1" y="1" width="22" height="22" fill="url(#grey)" stroke="#1e678a" stroke-width="2"/></svg></button>
      <p>将显示着色模型</p>
      <div class="find-box">
        <button class="binocular" title="查找"><svg class="icon" viewBox="0 0 24 24"><path d="M5 1h5v5l1 2h2l1-2V1h5v5l5 11v6h-8v-7h-8v7H0v-6L5 6z" fill="#444"/><path d="M5 8L3 18M19 8l2 10" stroke="#999" stroke-width="3"/></svg></button>
        <button class="pull" title="选项"><i class="arrow"></i></button>
      </div>
      <span class="count">选择了 1 项</span>
      <div class="pick"><select aria-label="选择过滤器"><option>几何</option></select><i class="arrow"></i></div>
      <svg class="grip" viewBox="0 0 16 16"><path d="M0 16L16 0M6 16L16 6M12 16l4-4" stroke="#bbb" stroke-width="2"/></svg>
    </footer>
  </div>

  <footer class="taskbar">
    <button class="start" title="开始"><svg class="icon" viewBox="0 0 24 24"><path d="M0 3l10-1v9H0zM11 2l13-2v11H11zM0 12h10v10L0 21zM11 12h13v12l-13-2z" fill="#fff"/></svg></button>
    <button class="start" title="搜索"><svg class="icon" viewBox="0 0 24 24"><circle cx="14" cy="10" r="8.500" fill="none" stroke="#fff" stroke-width="2.500"/><path d="M8 16l-7 8" stroke="#fff" stroke-width="3"/></svg></button>
    <div class="search">
      <svg class="icon" viewBox="0 0 24 24"><path d="M5 13h16C22 2 5 2 4 13c0 10 13 11 16 4" fill="none" stroke="#2d9af5" stroke-width="4"/><path d="M3 22C-3 20 9 3 22 2" fill="none" stroke="#5cb8ff" stroke-width="2"/></svg>
      <i></i>
      <input type="text" value="b站" aria-label="搜索">
      <button>搜索一下</button>
    </div>
    <div class="apps">
      <button title="文件资源管理器"><svg class="icon" viewBox="0 0 24 24"><path d="M1 2h9l2 3H1z" fill="#e09c10"/><path d="M1 4h22v18H1z" fill="#ffd466"/><path d="M5 14h14v8h-4v-4H9v4H5z" fill="#3c93d6"/></svg></button>
      <button class="run" title="Chrome"><svg class="icon" viewBox="0 0 24 24"><circle cx="12" cy="12" r="12" fill="#fbc116"/><path d="M12 12L1.600 6A12 12 0 0 1 22.400 6z" fill="#ea4335"/><path d="M12 12L1.600 6A12 12 0 0 0 12 24l5-9z" fill="#34a853"/><circle cx="12" cy="12" r="6" fill="#fff"/><circle cx="12" cy="12" r="4.500" fill="#4285f4"/></svg></button>
      <button class="run now" title="Creo"><svg class="icon"><use href="#cube"/></svg></button>
    </div>
    <div class="tray">
      <svg class="icon" viewBox="0 0 24 24"><path d="M3 17l9-9 9 9" fill="none" stroke="#fff" stroke-width="1.500"/></svg>
      <svg class="icon" viewBox="0 0 24 24"><circle cx="12" cy="12" r="11.500" fill="#ffd91f"/><path d="M2 6C8-3 20 0 23 9c-6-6-13-6-21-3zM22 18C16 27 4 24 1 15c6 6 13 6 21 3z" fill="#0ba24a"/><path d="M12 7v10M7 12h10" stroke="#0ba24a" stroke-width="3"/></svg>
      <svg class="icon" viewBox="0 0 24 24"><path d="M2 3v4M5 3v4M0 7h7v3c0 4-7 4-7 0M3.500 13v5h4" fill="none" stroke="#fff" stroke-width="1.300"/><path d="M8 6h14v13H7v-4" fill="none" stroke="#fff" stroke-width="1.300"/><path d="M10 9h10v8H10z" fill="#fff"/><path d="M23.500 10v5" stroke="#fff"/></svg>
      <svg class="icon" viewBox="0 0 24 24"><path d="M1 22C1 12 9 4 20 4M6 22c0-7 6-13 14-13M11 22c0-5 4-8 9-8" fill="none" stroke="#bbb" stroke-width="1.500"/><circle cx="18" cy="20" r="2.500" fill="#fff"/></svg>
      <svg class="icon" viewBox="0 0 24 24"><path d="M1 9h4l6-5v16l-6-5H1z" fill="none" stroke="#fff" stroke-width="1.500"/><path d="M14 9c2 2 2 5 0 7M17 6c4 4 4 9 0 13M20 3c5 6 5 13 0 19" fill="none" stroke="#aaa" stroke-width="1.300"/></svg>
      <span class="ime">英</span>
      <time>21:18</time>
      <svg class="icon note" viewBox="0 0 24 24"><path d="M0 1h24v18h-7l-5 5-1-5H0z" fill="#fff"/><path d="M5 6h14M5 10h14M5 14h9" stroke="#393a3a" stroke-width="1.500"/></svg>
      <div class="csdn">CSDN @这个名字先用着</div>
    </div>
  </footer>
</body>
</html>
```

FILE: styles.css
```css
* { box-sizing: border-box; }
body { margin: 0; height: 100vh; display: flex; flex-direction: column; font: 18px/24px "Open Sans", "Noto Sans CJK SC", sans-serif; color: #484b4d; background: #a1a1a1; overflow: hidden; }
button { font: inherit; color: inherit; background: none; border: 0; padding: 0; white-space: nowrap; }
h1, h2, p, ul { margin: 0; padding: 0; font-weight: normal; }
svg { display: block; flex: none; overflow: visible; }
.sprite { position: absolute; width: 0; height: 0; }
.icon { width: 24px; height: 24px; }
.arrow { flex: none; width: 10px; height: 6px; background: #5c6062; clip-path: polygon(0 0, 100% 0, 50% 100%); }
.arrow.off { background: #a7abad; }
.arrow.white { background: #fff; }

.window { flex: 1; min-height: 0; display: flex; flex-direction: column; margin: 6px 6px 5px; background: #f8fafb; }

/* title bar */
.titlebar { position: relative; height: 42px; display: flex; align-items: center; background: #dae0df; }
.logo { display: flex; align-items: center; gap: 8px; width: 127px; height: 36px; padding-left: 17px; border-right: 1px solid #aeb3b3; }
.logo span { font: 27px/28px "Open Sans", sans-serif; color: #5b6062; padding-bottom: 3px; -webkit-text-stroke: 1px #5b6062; }
.logo sup { font-size: 10px; line-height: 0; vertical-align: 10px; }
.quick { display: flex; align-items: center; gap: 12px; height: 36px; padding: 0 6px 0 10px; border-right: 1px solid #aeb3b3; }
.quick .arrow { margin: 0 -1px; }
.more { margin-left: 13px; }
.titlebar h1 { position: absolute; left: 0; right: 0; text-align: center; font-size: 21px; pointer-events: none; }
.controls { margin-left: auto; display: flex; gap: 24px; padding-right: 17px; }
.controls svg { width: 16px; height: 16px; }

/* ribbon tabs */
.tabs { display: flex; height: 41px; background: #3e4647; color: #fff; }
.tabs button { padding: 2px 34px 0 33px; font-size: 20px; }
.tabs .file { padding: 2px 30px 0; background: linear-gradient(160deg, #66d344, #52a534); }
.tabs .active { background: #f8fafb; color: #37841b; }
.help { margin-left: auto; display: flex; align-items: center; gap: 12px; padding-right: 6px; }
.help svg:first-child { margin-right: 2px; }

.ribbon { display: flex; height: 165px; background: #f8f9fb; border-bottom: 1px solid #b0bcbe; }
.group { display: flex; flex-direction: column; border-right: 1px solid #b4babc; margin: 3px 0; }
.tools { display: flex; gap: 12px; padding: 0 10px; height: 121px; }
.tools.center { justify-content: center; }
.col { display: flex; flex-direction: column; }
.col button { display: flex; align-items: center; gap: 6px; height: 41px; margin-top: -1px; margin-bottom: 1px; }
.col .arrow { margin-left: 5px; }
.big { display: flex; flex-direction: column; align-items: center; width: 48px; padding-top: 8px; }
.big.wide { width: 72px; }
.big svg { width: 44px; height: 44px; margin-bottom: 15px; }
.big .arrow { margin-top: 9px; }
.name { flex: 1; display: flex; align-items: center; justify-content: center; gap: 6px; padding: 4px 7px 0; }
button:disabled { color: #a9adaf; }

/* model tree */
.workspace { position: relative; flex: 1; min-height: 0; display: flex; border-bottom: 1px solid #a9b9ba; }
.side { width: 418px; background: #f7f9fb; border-right: 4px solid #dce2e1; }
.side-tabs { height: 44px; display: flex; background: #dce2e1; }
.side-tabs button { display: flex; align-items: center; gap: 8px; width: 113px; padding-left: 14px; background: #f7f9fb; }
.side-tabs .tall { height: 30px; }
.side-head { display: flex; justify-content: space-between; align-items: center; height: 42px; padding: 0 12px 0 42px; }
.side-head h2 { font-size: 18px; font-weight: bold; }
.filter { display: flex; align-items: center; height: 42px; padding-left: 18px; }
.find { position: relative; width: 295px; margin: 0 9px 0 6px; }
.find input { display: block; width: 100%; height: 42px; font: inherit; padding: 0 36px 0 8px; border: 1px solid #a9b2b4; background: #fff; }
.find svg { position: absolute; right: 9px; top: 14px; width: 12px; height: 12px; }
.plus { width: 16px; height: 16px; margin-left: 18px; }
.tree { list-style: none; }
.filter + .tree { padding-top: 6px; }
.tree li { display: flex; align-items: center; gap: 7px; height: 32px; padding-left: 23px; }
.tree i { flex: none; width: 16px; height: 12px; }
.tree .root { padding-left: 16px; }
.tree .lvl2 { padding-left: 53px; }
.tree .lvl3 { padding-left: 83px; }
.tree .dim { color: #babdbe; }
.closed { background: #85898b; clip-path: polygon(15% 0, 80% 50%, 15% 100%); }
.open { background: #85898b; clip-path: polygon(0 0, 75% 0, 38% 100%); }
.picked { height: 32px; padding: 0 3px 0 2px; margin-left: -1px; line-height: 32px; background: #b0e2ff; color: #222; }
.side hr { height: 3px; margin: 9px 7px 11px 12px; border: 0; background: linear-gradient(90deg, #dff0dc, #168a0b 25%, #168a0b 75%, #dff0dc); }

/* graphics area */
.canvas { position: relative; flex: 1; background: #fff; }
.view-bar { position: absolute; left: 511px; top: 7px; width: 468px; height: 46px; display: flex; align-items: center; justify-content: space-between; padding: 0 10px; background: #f7f9fb; border: 1px solid #98999b; }
.view-bar button { position: relative; }
.drop::after { content: ""; position: absolute; right: -4px; bottom: -3px; width: 5px; height: 5px; background: #555; clip-path: polygon(100% 0, 100% 100%, 0 100%); }
.part { position: absolute; left: 236px; top: 76px; width: 370px; height: 350px; }
.state { position: absolute; left: 14px; bottom: 82px; font: 15px/24px "Liberation Mono", "Noto Sans CJK SC", monospace; color: #888; }
.tolerance { position: absolute; right: 36px; bottom: 8px; text-align: center; font: 21px/25px "Liberation Mono", monospace; color: #999; }
.activate { position: absolute; right: 88px; bottom: -8px; width: 284px; font-size: 22px; line-height: 32px; white-space: nowrap; color: #b4b6b7; z-index: 2; }
.activate strong { display: block; font-size: 30px; line-height: 36px; font-weight: normal; }
.gauge { position: absolute; right: -3px; top: 565px; width: 12px; height: 89px; border: 1px solid #eee; border-radius: 6px; background: linear-gradient(#aaa 62px, #1fb558 62px, #3fd367 68px, #7dfa7e); box-shadow: 0 4px 8px #ddd; }

/* context menu */
.mini-bar, .menu { position: absolute; left: 118px; width: 266px; border: 1px solid #aaadae; background: #fff; box-shadow: 2px 2px 2px #777; z-index: 5; }
.mini-bar { top: -23px; background: #fbfbfb; }
.mini-bar div { display: flex; align-items: center; gap: 12px; height: 40px; padding: 0 0 2px 7px; border-bottom: 1px solid #e2e2e2; }
.mini-bar div:last-child { border: 0; }
.menu { top: 121px; background: linear-gradient(90deg, #fbfbfb 43px, #e4e5e6 43px, #e4e5e6 44px, #fff 44px); color: #535759; }
.menu-head { display: flex; align-items: center; height: 32px; padding-left: 9px; }
.menu-head span { flex: 1; margin: 0 2px 0 11px; padding-left: 8px; line-height: 32px; background: #f0f1f6; }
.edit svg { width: 28px; height: 24px; }
.menu button { position: relative; display: flex; align-items: center; width: 100%; height: 32px; padding-left: 50px; }
.menu .edit { height: 48px; padding: 0 0 2px 54px; }
.menu button .icon { position: absolute; left: 9px; top: 4px; }
.menu button i { margin-left: auto; margin-right: 9px; width: 7px; height: 11px; background: #555; clip-path: polygon(0 0, 100% 50%, 0 100%); }
.menu kbd { position: absolute; left: 209px; font: inherit; }
.menu hr { height: 1px; margin: 6px 2px 6px 46px; border: 0; background: #dedfe0; }
.menu .hover { background: #d3f1fe; }

/* status bar */
.status { display: flex; align-items: center; height: 49px; padding: 2px 0 0 9px; background: #f5fafb; }
.status > button { margin-right: 14px; }
.status .on { display: flex; align-items: center; justify-content: center; width: 32px; height: 32px; margin-right: 10px; background: #e0e2e3; border: 1px solid #b4b7b8; }
.status p { flex: 1; height: 32px; margin-left: 2px; padding-left: 29px; font-size: 16px; border-left: 1px solid #a9adaf; position: relative; }
.status p::before { content: ""; position: absolute; left: 9px; top: 7px; width: 8px; height: 8px; border-radius: 50%; background: #136389; }
.status p::after { content: ""; position: absolute; right: 60px; top: -6px; height: 38px; border-left: 1px solid #b8bcbd; }
.find-box { display: flex; height: 38px; padding: 1px 3px; border: 1px solid #b0b4b6; border-width: 0 1px; }
.find-box button { height: 36px; border: 1px solid #c0c5c7; background: #fafbfb; display: flex; align-items: center; justify-content: center; }
.binocular { width: 42px; }
.find-box .pull { width: 22px; border-left: 0; }
.count { width: 142px; padding-left: 6px; }
.pick { position: relative; width: 258px; }
.pick select { display: block; appearance: none; width: 100%; height: 34px; padding: 0 10px; font: inherit; color: inherit; background: linear-gradient(90deg, transparent 233px, #a9acae 233px, #a9acae 234px, #fafbfb 234px) #f7f8f8; border: 1px solid #a9acae; border-radius: 0; }
.pick .arrow { position: absolute; right: 7px; top: 14px; }
.grip { align-self: flex-end; width: 16px; height: 16px; margin: 0 5px 5px 6px; }

/* windows taskbar */
.taskbar { display: flex; align-items: center; height: 47px; background: #393a3a; color: #fff; }
.start { width: 54px; padding-left: 15px; }
.search { display: flex; align-items: center; width: 275px; height: 43px; background: #ececec; padding-left: 8px; }
.search .icon { width: 22px; }
.search i { width: 7px; height: 5px; margin: 0 8px 0 5px; background: #999; clip-path: polygon(0 100%, 50% 0, 100% 100%); }
.search input { flex: 1; min-width: 0; padding: 0; font: inherit; font-size: 15px; border: 0; background: none; color: #111; }
.search button { width: 70px; height: 43px; font-size: 15px; background: #238cff; }
.apps { display: flex; height: 47px; padding-left: 9px; gap: 7px; }
.apps button { display: flex; align-items: center; justify-content: center; width: 50px; border-bottom: 3px solid transparent; }
.apps .run { border-color: #76b9ed; }
.apps .now { width: 55px; background: linear-gradient(90deg, #636464 48px, #333 48px, #333 50px, #555 50px); padding-right: 6px; }
.tray { position: relative; margin-left: auto; display: flex; align-items: center; gap: 12px; height: 47px; padding-right: 30px; border-right: 8px solid #393a3a; box-shadow: inset -1px 0 #777; }
.ime { width: 22px; font-size: 24px; }
time { width: 68px; font-size: 19px; }
.csdn { position: absolute; right: 7px; bottom: 8px; font-size: 20px; white-space: nowrap; color: rgba(215, 215, 215, .75); }
```
